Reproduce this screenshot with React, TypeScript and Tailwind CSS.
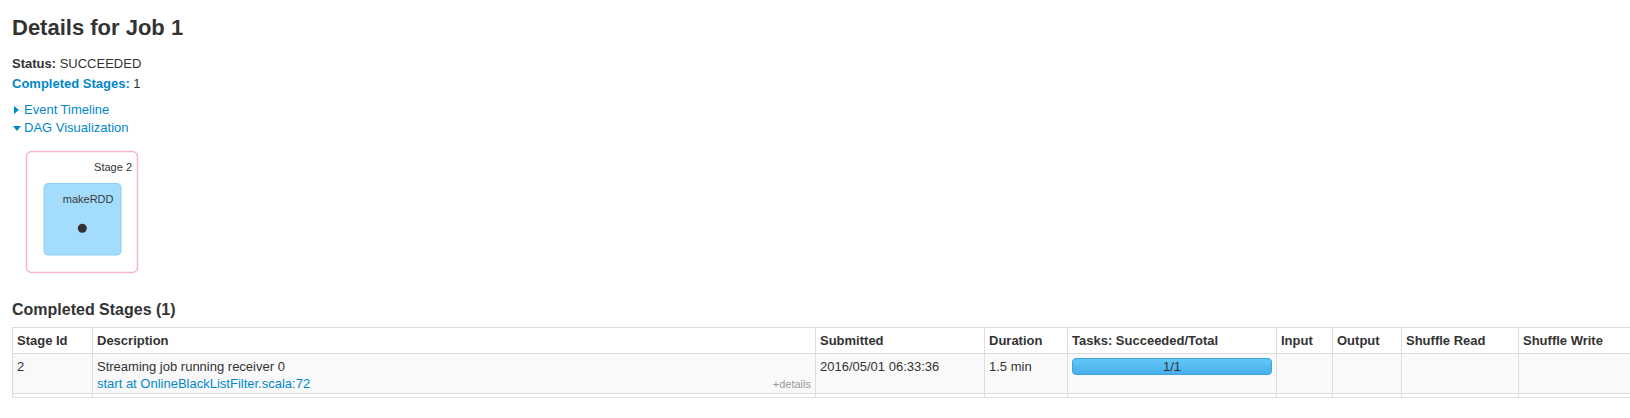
import React from "react"

const cols = [80, 723, 169, 83, 209, 56, 69, 117, 122]
const heads = ["Stage Id", "Description", "Submitted", "Duration", "Tasks: Succeeded/Total", "Input", "Output", "Shuffle Read", "Shuffle Write"]

const DagGraph = () => {
    return (
        <svg width={114} height={124} className="block ml-[13px] mt-[13px]">
            <rect x={1.5} y={1.5} width={111} height={121} rx={5} fill="#fff" stroke="#f7b8c6" strokeWidth={1.5} />
            <text x={107} y={20.5} textAnchor="end" fontSize={11} fill="#333" fontFamily="'Liberation Sans', Arial, sans-serif">
                Stage 2
            </text>
            <rect x={19} y={33.5} width={77} height={71.5} rx={4} fill="#a3dcfd" stroke="#8fcdf1" strokeWidth={1} />
            <text x={88.5} y={53} textAnchor="end" fontSize={11} fill="#3a3a3a" fontFamily="'Liberation Sans', Arial, sans-serif">
                makeRDD
            </text>
            <circle cx={57.3} cy={78.3} r={4.5} fill="#333" />
        </svg>
    )
}

export default function App() {
    return (
        <main className="w-[1630px] h-[418px] overflow-hidden bg-white px-3 font-['Liberation_Sans',Arial,sans-serif] text-[13px] text-[#333]">
            <h3 className="mt-[15px] text-[22px] leading-[26px] font-bold">Details for Job 1</h3>

            <ul className="mt-[13px] leading-[20px]">
                <li>
                    <strong>Status:</strong> SUCCEEDED
                </li>
                <li>
                    <a className="text-[#0088cc] font-bold">Completed Stages:</a> 1
                </li>
            </ul>

            <div className="mt-[7px] leading-[18px] text-[#0088cc]">
                <div className="flex items-center">
                    <span className="w-[12px] flex items-center">
                        <span className="ml-[2px] w-0 h-0 border-y-[4px] border-y-transparent border-l-[5px] border-l-[#0088cc]" />
                    </span>
                    <span>Event Timeline</span>
                </div>
                <div className="flex items-center">
                    <span className="w-[12px] flex items-center">
                        <span className="ml-[1px] w-0 h-0 border-x-[4px] border-x-transparent border-t-[5px] border-t-[#0088cc]" />
                    </span>
                    <span>DAG Visualization</span>
                </div>
            </div>

            <DagGraph />

            <h4 className="mt-[26px] text-[16px] leading-[20px] font-bold">Completed Stages (1)</h4>

            <table className="mt-[7px] table-fixed border-collapse w-[1628px]">
                <colgroup>
                    {cols.map((w, i) => (
                        <col key={i} style={{ width: w }} />
                    ))}
                </colgroup>
                <thead>
                    <tr>
                        {heads.map((h) => (
                            <th key={h} className="border border-[#ddd] px-[4px] py-[4px] leading-[17px] text-left font-bold align-top whitespace-nowrap">
                                {h}
                            </th>
                        ))}
                    </tr>
                </thead>
                <tbody>
                    <tr className="bg-[#f9f9f9]">
                        <td className="border border-[#ddd] px-[4px] pt-[4px] pb-0 leading-[17px] align-top">2</td>
                        <td className="border border-[#ddd] px-[4px] pt-[4px] pb-0 leading-[17px] align-top">
                            <div>Streaming job running receiver 0</div>
                            <div className="flex items-baseline justify-between">
                                <a className="text-[#0088cc]">start at OnlineBlackListFilter.scala:72</a>
                                <span className="text-[11px] text-[#999]">+details</span>
                            </div>
                        </td>
                        <td className="border border-[#ddd] px-[4px] pt-[4px] pb-0 leading-[17px] align-top">2016/05/01 06:33:36</td>
                        <td className="border border-[#ddd] px-[4px] pt-[4px] pb-0 leading-[17px] align-top">1.5 min</td>
                        <td className="border border-[#ddd] px-[4px] pt-[4px] pb-0 leading-[17px] align-top">
                            <div className="h-[17px] rounded-[4px] border border-[#3fa4de] bg-linear-to-b from-[#62c7f7] to-[#47afe9] flex items-center justify-center text-[#333]">
                                1/1
                            </div>
                        </td>
                        <td className="border border-[#ddd]" />
                        <td className="border border-[#ddd]" />
                        <td className="border border-[#ddd]" />
                        <td className="border border-[#ddd]" />
                    </tr>
                    <tr className="h-[4px]">
                        {cols.map((_, i) => (
                            <td key={i} className="border border-[#ddd] p-0 h-[4px]" />
                        ))}
                    </tr>
                </tbody>
            </table>
        </main>
    )
}
